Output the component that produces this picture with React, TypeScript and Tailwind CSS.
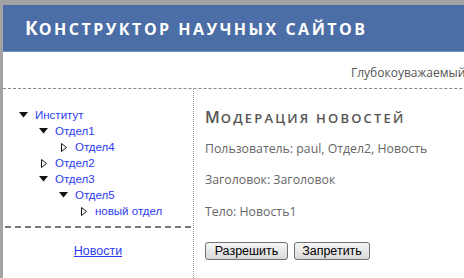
import { ReactNode } from 'react';

type Node = { label: string; open?: boolean; children?: Node[] };

const tree: Node = {
  label: 'Институт',
  open: true,
  children: [
    { label: 'Отдел1', open: true, children: [{ label: 'Отдел4' }] },
    { label: 'Отдел2' },
    {
      label: 'Отдел3',
      open: true,
      children: [{ label: 'Отдел5', open: true, children: [{ label: 'новый отдел' }] }],
    },
  ],
};

function Arrow({ open }: { open?: boolean }) {
  return open ? (
    <svg width="9" height="6" viewBox="0 0 9 6" className="shrink-0">
      <path d="M0 0 H9 L4.5 5.5 Z" fill="#111" />
    </svg>
  ) : (
    <svg width="6" height="9" viewBox="0 0 6 9" className="shrink-0 ml-[2px]">
      <path d="M0.5 0.5 L5.5 4.5 L0.5 8.5 Z" fill="none" stroke="#111" strokeWidth="1" />
    </svg>
  );
}

function TreeNode({ node }: { node: Node }): ReactNode {
  return (
    <li>
      <div className="flex items-center h-[16px]">
        <span className="w-[17px] flex items-center pl-[1px]">
          <Arrow open={node.open} />
        </span>
        <a className="text-[#2b3bf2] cursor-pointer">{node.label}</a>
      </div>
      {node.children && (
        <ul className="pl-[20px]">
          {node.children.map((c) => (
            <TreeNode key={c.label} node={c} />
          ))}
        </ul>
      )}
    </li>
  );
}

export default function App() {
  return (
    <div className="w-[464px] h-[278px] overflow-hidden bg-[#a3a3a3] pt-[5px] pl-[3px]">
      <div className="w-[700px] h-full bg-white flex flex-col">
        <header className="h-[47px] bg-[#4b6ea6] border-b border-[#6f8dbb] flex items-center pl-[22px]">
          <h1
            className="text-white font-bold whitespace-nowrap leading-none"
            style={{ fontFamily: '"Open Sans", "DejaVu Sans", sans-serif' }}
          >
            <span className="text-[19px] tracking-[1px]">К</span>
            <span className="text-[16px] uppercase tracking-[2.5px]">онструктор научных сайтов</span>
          </h1>
        </header>

        <div
          className="h-[36px] flex items-center pl-[348px] pt-[6px] text-[12px] text-[#555] whitespace-nowrap"
          style={{ fontFamily: '"Open Sans", sans-serif' }}
        >
          Глубокоуважаемый paul!
        </div>

        <div className="border-t border-dashed border-[#888]" />

        <div className="flex flex-1">
          <aside className="w-[191px] border-r border-dotted border-[#999] flex flex-col">
            <ul
              className="pt-[18px] pb-[7px] pl-[15px] text-[11.5px] leading-[16px]"
              style={{ fontFamily: '"Liberation Sans", Arial, sans-serif' }}
            >
              <TreeNode node={tree} />
            </ul>
            <div className="border-t-2 border-dashed border-[#777] mx-[2px]" />
            <div
              className="text-center pt-[14px] text-[12.5px]"
              style={{ fontFamily: '"Liberation Sans", Arial, sans-serif' }}
            >
              <a className="text-[#2b3bf2] underline cursor-pointer">Новости</a>
            </div>
          </aside>

          <main
            className="pl-[11px] pt-[17px] text-[#666]"
            style={{ fontFamily: '"Open Sans", sans-serif' }}
          >
            <h2 className="font-semibold text-[#555] leading-[22px] whitespace-nowrap">
              <span className="text-[16px] tracking-[1px]">М</span>
              <span className="text-[13px] uppercase tracking-[2.2px]">одерация новостей</span>
            </h2>
            <p className="text-[12.3px] mt-[11px] leading-[18px]">Пользователь: paul, Отдел2, Новость</p>
            <p className="text-[12.3px] mt-[13px] leading-[18px]">Заголовок: Заголовок</p>
            <p className="text-[12.3px] mt-[14px] leading-[18px]">Тело: Новость1</p>
            <div
              className="flex gap-[6px] mt-[21px] text-[12.5px] text-black"
              style={{ fontFamily: '"Liberation Sans", Arial, sans-serif' }}
            >
              <button className="h-[18px] w-[83px] border border-[#707070] rounded-[3px] bg-gradient-to-b from-[#f6f6f6] to-[#d8d8d8] leading-[16px]">
                Разрешить
              </button>
              <button className="h-[18px] w-[76px] border border-[#707070] rounded-[3px] bg-gradient-to-b from-[#f6f6f6] to-[#d8d8d8] leading-[16px]">
                Запретить
              </button>
            </div>
          </main>
        </div>
      </div>
    </div>
  );
}
